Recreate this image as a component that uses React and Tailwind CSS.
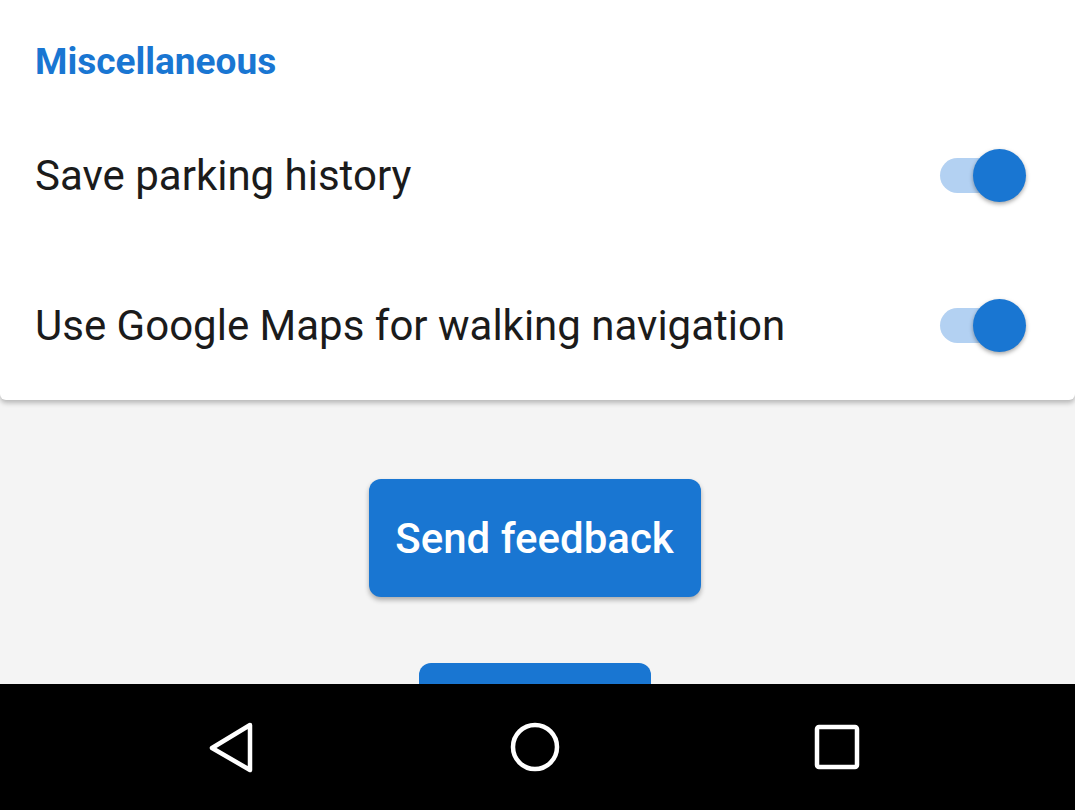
import React, { useState } from "react";

// Toggle switch in the Android Material style
function Toggle({ on, onChange }) {
  return (
    <button
      onClick={() => onChange(!on)}
      className="relative w-[92px] h-[60px] flex items-center shrink-0"
    >
      <span
        className={
          "absolute left-[5px] w-[70px] h-[35px] rounded-full " +
          (on ? "bg-[#b3d1f2]" : "bg-[#bdbdbd]")
        }
      />
      <span
        className={
          "absolute top-[4px] w-[53px] h-[53px] rounded-full shadow-[0_2px_4px_rgba(0,0,0,0.35)] " +
          (on ? "left-[38px] bg-[#1976d2]" : "left-[2px] bg-[#fafafa]")
        }
      />
    </button>
  );
}

function SettingRow({ label, on, onChange }) {
  return (
    <div className="flex items-center justify-between pl-[35px] pr-[48px] h-[150px]">
      <span className="text-[42px] text-[#1b1b1b]">{label}</span>
      <Toggle on={on} onChange={onChange} />
    </div>
  );
}

export default function App() {
  const [parking, setParking] = useState(true);
  const [maps, setMaps] = useState(true);

  return (
    <div
      className="w-[1075px] h-[810px] flex flex-col bg-[#f4f4f4] overflow-hidden"
      style={{ fontFamily: "Roboto, 'Noto Sans', sans-serif" }}
    >
      {/* ========== settings card ========== */}
      <div className="bg-white rounded-b-[6px] shadow-[0_3px_5px_rgba(0,0,0,0.25)] pt-[38px]">
        <h2 className="pl-[35px] text-[37px] font-bold text-[#1976d2] leading-[48px]">
          Miscellaneous
        </h2>
        <div className="mt-[14px]">
          <SettingRow label="Save parking history" on={parking} onChange={setParking} />
          <SettingRow
            label="Use Google Maps for walking navigation"
            on={maps}
            onChange={setMaps}
          />
        </div>
      </div>

      {/* ========== buttons ========== */}
      <div className="flex-1 flex flex-col items-center pt-[79px] pr-[6px] gap-[66px] overflow-hidden">
        <button className="w-[332px] h-[118px] rounded-[12px] bg-[#1976d2] text-white text-[42px] font-medium shadow-[0_3px_5px_rgba(0,0,0,0.3)] shrink-0">
          Send feedback
        </button>
        <button className="w-[232px] h-[118px] rounded-[12px] bg-[#1976d2] shrink-0" />
      </div>

      {/* ========== nav bar ========== */}
      <div className="h-[126px] bg-black flex items-center shrink-0">
        <div className="flex w-full justify-between pl-[206px] pr-[212px]">
          <svg width="52" height="52" viewBox="0 0 52 52">
            <path
              d="M44 4 L6 27 L44 49 Z"
              fill="none"
              stroke="white"
              strokeWidth="4.5"
              strokeLinejoin="round"
            />
          </svg>
          <svg width="52" height="52" viewBox="0 0 52 52">
            <circle cx="26" cy="26" r="22" fill="none" stroke="white" strokeWidth="4.5" />
          </svg>
          <svg width="52" height="52" viewBox="0 0 52 52">
            <rect x="6" y="6" width="40" height="40" rx="2" fill="none" stroke="white" strokeWidth="4.5" />
          </svg>
        </div>
      </div>
    </div>
  );
}
